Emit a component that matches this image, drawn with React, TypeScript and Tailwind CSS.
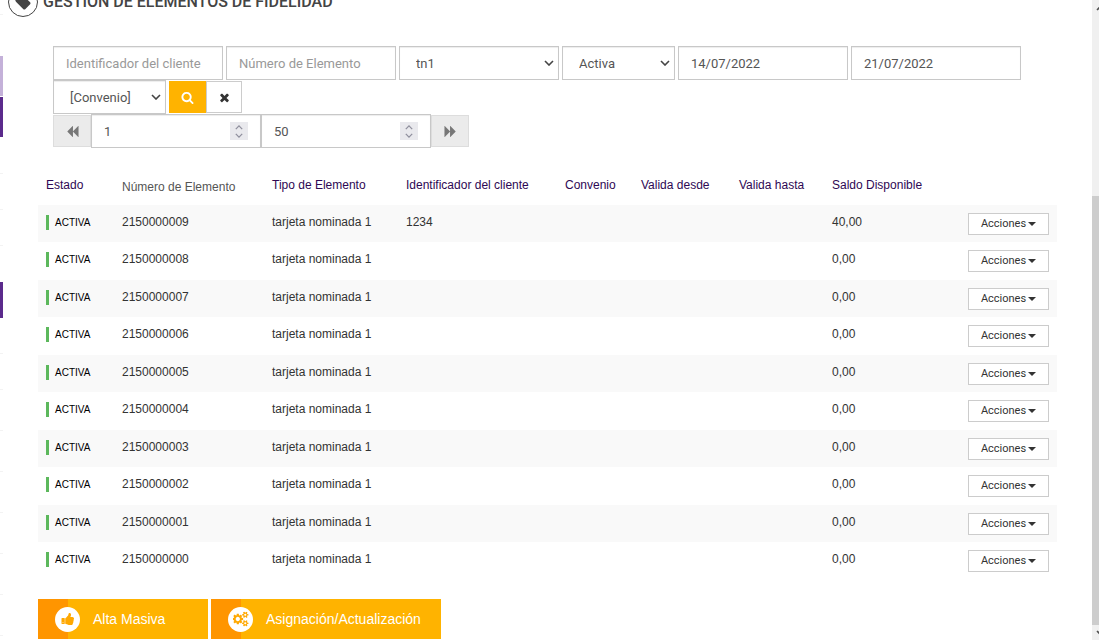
import React, { useState } from 'react';

interface Elemento {
  numero: string;
  tipo: string;
  cliente: string;
  saldo: string;
}

const elementos: Elemento[] = Array.from({ length: 10 }, (_, i) => ({
  numero: String(2150000009 - i),
  tipo: 'tarjeta nominada 1',
  cliente: i === 0 ? '1234' : '',
  saldo: i === 0 ? '40,00' : '0,00',
}));

// Font Awesome 4 shapes, 1792 units per em
const icons = {
  tag: 'M576 448q0-53-37.5-90.5t-90.5-37.5-90.5 37.5-37.5 90.5 37.5 90.5 90.5 37.5 90.5-37.5 37.5-90.5zm1067 576q0 53-37 90l-491 492q-39 37-91 37-53 0-90-37l-715-716q-38-37-64.5-101t-26.5-117v-416q0-52 38-90t90-38h416q53 0 117 26.5t102 64.5l715 714q37 39 37 91z',
  search:
    'M1216 832q0-185-131.5-316.5t-316.5-131.5-316.5 131.5-131.5 316.5 131.5 316.5 316.5 131.5 316.5-131.5 131.5-316.5zm512 832q0 52-38 90t-90 38q-54 0-90-38l-343-342q-179 124-399 124-143 0-273.5-55.5t-225-150-150-225-55.5-273.5 55.5-273.5 150-225 225-150 273.5-55.5 273.5 55.5 225 150 150 225 55.5 273.5q0 220-124 399l343 343q37 37 37 90z',
  times:
    'M1490 1322q0 40-28 68l-136 136q-28 28-68 28t-68-28l-294-294-294 294q-28 28-68 28t-68-28l-136-136q-28-28-28-68t28-68l294-294-294-294q-28-28-28-68t28-68l136-136q28-28 68-28t68 28l294 294 294-294q28-28 68-28t68 28l136 136q28 28 28 68t-28 68l-294 294 294 294q28 28 28 68z',
  backward:
    'M1683 141q19-19 32-13t13 32v1472q0 26-13 32t-32-13l-710-710q-9-9-13-19v710q0 26-13 32t-32-13l-710-710q-19-19-19-45t19-45l710-710q19-19 32-13t13 32v710q4-10 13-19z',
  thumbsUp:
    'M320 1344q0-26-19-45t-45-19q-27 0-45.5 19t-18.5 45q0 27 18.5 45.5t45.5 18.5q26 0 45-18.5t19-45.5zm160-512v640q0 26-19 45t-45 19h-288q-26 0-45-19t-19-45v-640q0-26 19-45t45-19h288q26 0 45 19t19 45zm1184 0q0 86-55 149 15 44 15 76 3 76-43 137 17 56 0 117-15 57-54 94 9 112-49 181-64 76-197 78h-129q-66 0-144-15.5t-121.5-29-120.5-39.5q-123-43-158-44-26-1-45-19.5t-19-44.5v-641q0-25 18-43.5t43-20.5q24-2 76-59t101-121q68-87 101-120 18-18 31-48t17.5-48.5 13.5-60.5q7-39 12.5-61t19.5-52 34-50q19-19 45-19 46 0 82.5 10.5t60 26 40 40.5 24 45 12 50 5 45 .5 39q0 38-9.5 76t-19 60-27.5 56q-3 6-10 18t-11 22-8 24h277q78 0 135 57t57 135z',
  cogs: 'M832 896q0-106-75-181t-181-75-181 75-75 181 75 181 181 75 181-75 75-181zm768 512q0-52-38-90t-90-38-90 38-38 90q0 53 37.5 90.5t90.5 37.5 90.5-37.5 37.5-90.5zm0-1024q0-52-38-90t-90-38-90 38-38 90q0 53 37.5 90.5t90.5 37.5 90.5-37.5 37.5-90.5zm-384 421v185q0 10-7 19.5t-16 10.5l-155 24q-11 35-32 76 34 48 90 115 7 11 7 20 0 12-7 19-23 30-82.5 89.5t-78.5 59.5q-11 0-21-7l-115-90q-37 19-77 31-11 108-23 155-7 24-30 24h-186q-11 0-20-7.5t-10-17.5l-23-153q-34-10-75-31l-118 89q-7 7-20 7-11 0-21-8-144-133-144-160 0-9 7-19 10-14 41-53t47-61q-23-44-35-82l-152-24q-10-1-17-9.5t-7-19.5v-185q0-10 7-19.5t16-10.5l155-24q11-35 32-76-34-48-90-115-7-11-7-20 0-12 7-20 22-30 82-89t79-59q11 0 21 7l115 90q34-18 77-32 11-108 23-154 7-24 30-24h186q11 0 20 7.5t10 17.5l23 153q34 10 75 31l118-89q8-7 20-7 11 0 21 8 144 133 144 160 0 8-7 19-12 16-42 54t-45 60q23 48 34 82l152 23q10 2 17 10.5t7 19.5zm640 533v140q0 16-149 31-12 27-30 52 51 113 51 138 0 4-4 7-122 71-124 71-8 0-46-47t-52-68q-20 2-30 2t-30-2q-14 21-52 68t-46 47q-2 0-124-71-4-3-4-7 0-25 51-138-18-25-30-52-149-15-149-31v-140q0-16 149-31 13-29 30-52-51-113-51-138 0-4 4-7 4-2 35-20t59-34 30-16q8 0 46 46.5t52 67.5q20-2 30-2t30 2q51-71 92-112l6-2q4 0 124 70 4 3 4 7 0 25-51 138 17 23 30 52 149 15 149 31zm0-1024v140q0 16-149 31-12 27-30 52 51 113 51 138 0 4-4 7-122 71-124 71-8 0-46-47t-52-68q-20 2-30 2t-30-2q-14 21-52 68t-46 47q-2 0-124-71-4-3-4-7 0-25 51-138-18-25-30-52-149-15-149-31v-140q0-16 149-31 13-29 30-52-51-113-51-138 0-4 4-7 4-2 35-20t59-34 30-16q8 0 46 46.5t52 67.5q20-2 30-2t30 2q51-71 92-112l6-2q4 0 124 70 4 3 4 7 0 25-51 138 17 23 30 52 149 15 149 31z',
};

interface IconProps {
  name: keyof typeof icons;
  size?: number;
  className?: string;
}

const Icon: React.FC<IconProps> = ({ name, size = 13, className = '' }) => (
  <svg
    width={size}
    height={size}
    viewBox={name === 'cogs' ? '0 0 1920 1792' : '0 0 1792 1792'}
    fill="currentColor"
    className={className}
    aria-hidden="true"
  >
    <path d={icons[name]} />
  </svg>
);

const Chevron: React.FC<{ className?: string }> = ({ className }) => (
  <svg viewBox="0 0 10 6" className={className} fill="none" stroke="currentColor" strokeWidth="1.6" aria-hidden="true">
    <path d="M1 1l4 4 4-4" />
  </svg>
);

const inputClass =
  'block h-[34px] w-[170px] border border-[#c8c8c8] bg-white px-3 text-[13px] text-[#555] placeholder-[#999] shadow-[inset_0_1px_1px_rgba(0,0,0,0.075)] outline-none';

const pagerClass = 'flex h-8 w-[38px] items-center justify-center border border-[#ddd] bg-[#ebebeb] text-[#777]';

interface SelectProps {
  label: string;
  options: string[];
  className: string;
}

const FilterSelect: React.FC<SelectProps> = ({ label, options, className }) => (
  <div className={`relative ${className}`}>
    <select
      aria-label={label}
      className="block h-[34px] w-full appearance-none border border-[#c8c8c8] bg-white px-4 pt-px text-[13px] text-[#555] shadow-[inset_0_1px_1px_rgba(0,0,0,0.075)] outline-none"
    >
      {options.map((o) => (
        <option key={o}>{o}</option>
      ))}
    </select>
    <Chevron className="pointer-events-none absolute top-[14px] right-[5px] h-[6px] w-[10px] text-[#444]" />
  </div>
);

const NumberBox: React.FC<{ label: string; initial: number }> = ({ label, initial }) => {
  const [value, setValue] = useState(initial);
  return (
    <div className="relative">
      <input
        type="number"
        aria-label={label}
        value={value}
        onChange={(e) => setValue(Number(e.target.value))}
        className={`${inputClass} [appearance:textfield] [&::-webkit-inner-spin-button]:appearance-none`}
      />
      <span className="pointer-events-none absolute top-2 right-[13px] flex h-[18px] w-[18px] flex-col items-center justify-center gap-[3px] bg-[#e9e9ed] text-[#8f8f9d]">
        <Chevron className="h-[5px] w-2 rotate-180" />
        <Chevron className="h-[5px] w-2" />
      </span>
    </div>
  );
};

// only the right edge of the collapsed menu is visible
const Sidebar = () => (
  <nav className="w-[3px] shrink-0 overflow-hidden *:border-[#f3f3f3]">
    <div className="h-[15px] border-b" />
    <div className="h-[41px]" />
    <div className="h-10 bg-[#c4b1d9]" />
    <div className="mt-px h-10 bg-[#5b2a8c]" />
    <div className="h-[37px] border-b" />
    <div className="h-9 border-b" />
    <div className="h-9 border-b" />
    <div className="h-9" />
    <div className="h-9 bg-[#5b2a8c]" />
    <div className="h-9 border-b" />
    <div className="h-9 border-b" />
    <div className="h-[41px] border-b" />
    <div className="h-[41px] border-b" />
    <div className="h-[41px] border-b" />
    <div className="h-[41px] border-b" />
    <div className="h-[41px] border-b" />
    <div className="h-[41px] border-b" />
  </nav>
);

const Scrollbar = () => (
  <div className="flex w-[7px] shrink-0 flex-col overflow-hidden bg-[#f0f0f0] text-[#505050]">
    <Chevron className="mt-[5px] ml-1 h-[6px] w-[10px] shrink-0 rotate-180" />
    <div className="mt-[185px] mb-[5px] flex-1 bg-[#cdcdcd]" />
    <Chevron className="mb-1 ml-1 h-[6px] w-[10px] shrink-0" />
  </div>
);

const Filters = () => (
  <form className="px-[15px] font-[Roboto,sans-serif]" onSubmit={(e) => e.preventDefault()}>
    <div className="flex flex-wrap gap-x-[3px]">
      <input className={inputClass} aria-label="Identificador del cliente" placeholder="Identificador del cliente" />
      <input className={inputClass} aria-label="Número de Elemento" placeholder="Número de Elemento" />
      <FilterSelect label="Tipo" options={['tn1']} className="w-40" />
      <FilterSelect label="Estado" options={['Activa', 'Inactiva']} className="w-[113px]" />
      <input className={inputClass} aria-label="Desde" defaultValue="14/07/2022" />
      <input className={inputClass} aria-label="Hasta" defaultValue="21/07/2022" />
      <FilterSelect label="Convenio" options={['[Convenio]']} className="w-[113px]" />
      <div className="flex items-center">
        <button type="submit" aria-label="Buscar" className="flex h-8 w-[37px] items-center justify-center bg-[#ffb300] text-white">
          <Icon name="search" />
        </button>
        <button type="reset" aria-label="Limpiar" className="flex h-8 w-9 items-center justify-center border border-[#ccc] bg-white text-[#333]">
          <Icon name="times" />
        </button>
      </div>
    </div>
    <div className="flex items-center">
      <button type="button" aria-label="Anterior" className={pagerClass}>
        <Icon name="backward" />
      </button>
      <NumberBox label="Página" initial={1} />
      <NumberBox label="Registros por página" initial={50} />
      <button type="button" aria-label="Siguiente" className={pagerClass}>
        <Icon name="backward" className="rotate-180" />
      </button>
    </div>
  </form>
);

const ElementosTable = () => (
  <table className="mt-4 w-full table-fixed text-left text-[12px] leading-[18px] text-[#333]">
    <colgroup>
      <col className="w-[76px]" />
      <col className="w-[150px]" />
      <col className="w-[134px]" />
      <col className="w-[159px]" />
      <col className="w-[76px]" />
      <col className="w-[98px]" />
      <col className="w-[93px]" />
      <col />
      <col className="w-[97px]" />
    </colgroup>
    <thead>
      <tr className="h-[41px] align-top whitespace-nowrap text-[#2e0854] *:px-2 *:pt-3 *:font-normal">
        <th>Estado</th>
        <th className="text-[#555]">
          <span className="block pt-[2px]">Número de Elemento</span>
        </th>
        <th>Tipo de Elemento</th>
        <th>Identificador del cliente</th>
        <th>Convenio</th>
        <th>Valida desde</th>
        <th>Valida hasta</th>
        <th>Saldo Disponible</th>
        <th aria-label="Acciones" />
      </tr>
    </thead>
    <tbody>
      {elementos.map((el) => (
        <tr key={el.numero} className="align-top *:px-2 *:pt-2 odd:h-[37px] odd:bg-[#f9f9f9] even:h-[38px]">
          <td>
            <span className="mt-[2px] block border-l-[3px] border-[#5cb85c] pl-[6px] text-[10px] leading-[15px] text-black">ACTIVA</span>
          </td>
          <td>{el.numero}</td>
          <td>{el.tipo}</td>
          <td>{el.cliente}</td>
          <td />
          <td />
          <td />
          <td>{el.saldo}</td>
          <td>
            <button className="flex h-[22px] w-full items-center justify-center gap-[2px] border border-[#ccc] bg-white font-[Roboto,sans-serif] text-[11px] text-[#333]">
              Acciones
              <svg width="8" height="4" viewBox="0 0 8 4" fill="currentColor" aria-hidden="true">
                <path d="M0 0h8L4 4z" />
              </svg>
            </button>
          </td>
        </tr>
      ))}
    </tbody>
  </table>
);

interface ActionProps {
  icon: React.ReactNode;
  children: React.ReactNode;
}

const ActionButton: React.FC<ActionProps> = ({ icon, children }) => (
  <button className="flex h-10 min-w-[170px] items-center border-l-[30px] border-[#ff9500] bg-[#ffb300] pr-5 text-[14px] text-white">
    <span className="-ml-[13px] mr-[13px] flex h-[25px] w-[25px] items-center justify-center rounded-full bg-white text-[#ffa800]">{icon}</span>
    {children}
  </button>
);

export default function App() {
  return (
    <div className="flex h-screen overflow-hidden bg-white font-['Liberation_Sans',Arial,sans-serif]">
      <Sidebar />
      <main className="min-w-0 flex-1 px-[35px]">
        {/* heading is scrolled partly out of view */}
        <header className="-mt-[13px] -ml-[30px] flex h-[30px] items-center gap-[5px]">
          <span className="flex h-[30px] w-[30px] items-center justify-center rounded-full border border-[#444] text-[#444]">
            <Icon name="tag" size={18} />
          </span>
          <h1 className="font-[Roboto,sans-serif] text-[16px] font-medium text-[#444]">GESTIÓN DE ELEMENTOS DE FIDELIDAD</h1>
        </header>
        <div className="pt-[29px]">
          <Filters />
          <ElementosTable />
          <div className="mt-[19px] flex gap-[3px]">
            <ActionButton icon={<Icon name="thumbsUp" size={14} />}>Alta Masiva</ActionButton>
            <ActionButton icon={<Icon name="cogs" size={16} />}>Asignación/Actualización</ActionButton>
          </div>
        </div>
      </main>
      <Scrollbar />
    </div>
  );
}
